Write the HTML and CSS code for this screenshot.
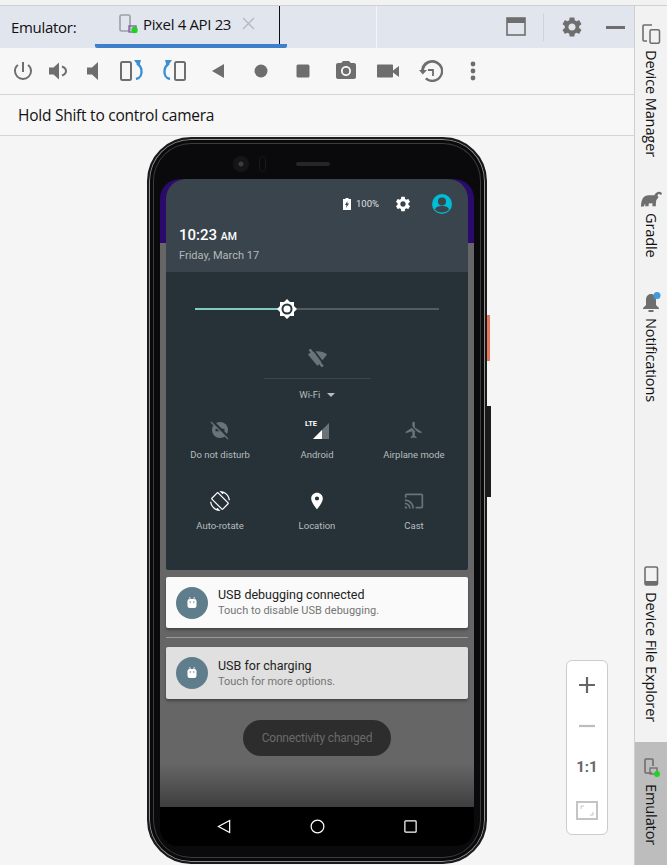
FILE: index.html
```html
<!DOCTYPE html>
<html lang="en">
<head>
    <meta charset="UTF-8">
    <meta name="viewport" content="width=device-width, initial-scale=1.0">
    <title>Emulator</title>
    <link rel="stylesheet" href="styles.css">
</head>
<body>
    <div class="app">
        <div class="main">
            <div class="tabbar">
                <span class="tabbar-label">Emulator:</span>
                <div class="tab">
                    <svg class="tab-icon" viewBox="0 0 20 20">
                        <rect x="1" y="1" width="10" height="16" rx="1.5" fill="none" stroke="#9aa0a6" stroke-width="1.6"/>
                        <rect x="10" y="12" width="7" height="6" fill="none" stroke="#8c5fa8" stroke-width="1.4"/>
                        <circle cx="15.5" cy="16" r="3.2" fill="#22d422"/>
                    </svg>
                    <span class="tab-title">Pixel 4 API 23</span>
                    <svg class="tab-close" viewBox="0 0 12 12"><path d="M1 1l10 10M11 1L1 11" stroke="#b4b8be" stroke-width="1.2"/></svg>
                </div>
                <div class="tabbar-rule"></div>
                <div class="tabbar-actions">
                    <svg class="act-window" viewBox="0 0 20 20"><rect x="1" y="1" width="18" height="17" fill="none" stroke="#6e6e6e" stroke-width="1.6"/><rect x="1" y="1" width="18" height="5" fill="#6e6e6e"/></svg>
                    <span class="act-sep"></span>
                    <svg class="act-gear" viewBox="0 0 24 24"><path fill="#6e6e6e" d="M19.14 12.94c.04-.3.06-.61.06-.94 0-.32-.02-.64-.07-.94l2.03-1.58c.18-.14.23-.41.12-.61l-1.92-3.32c-.12-.22-.37-.29-.59-.22l-2.39.96c-.5-.38-1.03-.7-1.62-.94l-.36-2.54c-.04-.24-.24-.41-.48-.41h-3.84c-.24 0-.43.17-.47.41l-.36 2.54c-.59.24-1.13.57-1.62.94l-2.39-.96c-.22-.08-.47 0-.59.22L2.74 8.87c-.12.21-.08.47.12.61l2.03 1.58c-.05.3-.09.63-.09.94s.02.64.07.94l-2.03 1.58c-.18.14-.23.41-.12.61l1.92 3.32c.12.22.37.29.59.22l2.39-.96c.5.38 1.03.7 1.62.94l.36 2.54c.05.24.24.41.48.41h3.84c.24 0 .44-.17.47-.41l.36-2.54c.59-.24 1.13-.56 1.62-.94l2.39.96c.22.08.47 0 .59-.22l1.92-3.32c.12-.22.07-.47-.12-.61l-2.01-1.58zM12 15.6c-1.98 0-3.6-1.62-3.6-3.6s1.62-3.6 3.6-3.6 3.6 1.62 3.6 3.6-1.62 3.6-3.6 3.6z"/></svg>
                    <span class="act-min"></span>
                </div>
            </div>

            <div class="toolbar">
                <div class="tool"><svg viewBox="0 0 24 24"><path fill="#6e6e6e" d="M13 3h-2v10h2V3zm4.83 2.17l-1.42 1.42A6.92 6.92 0 0 1 19 12c0 3.87-3.13 7-7 7A6.995 6.995 0 0 1 7.58 6.58L6.17 5.17A8.932 8.932 0 0 0 3 12a9 9 0 0 0 18 0c0-2.74-1.23-5.18-3.17-6.83z"/></svg></div>
                <div class="tool"><svg viewBox="0 0 24 24"><path fill="#6e6e6e" d="M2 8.5v7h4.5l5.5 5V3.500L6.500 8.500H2z"/><path fill="none" stroke="#6e6e6e" stroke-width="2" d="M15 7.500c3 1 4 3 4 4.500s-1 3.500-4 4.500"/></svg></div>
                <div class="tool"><svg viewBox="0 0 24 24"><path fill="#6e6e6e" d="M4 8.500v7h5l6 5.500V3L9 8.500H4z"/></svg></div>
                <div class="tool"><svg class="tool-rot" viewBox="0 0 26 24">
                    <rect x="2" y="3" width="10" height="18" rx="1.500" fill="none" stroke="#6e6e6e" stroke-width="2"/>
                    <path fill="none" stroke="#3d8fd1" stroke-width="2.400" d="M17 20c4.500-1 6-5 5.500-8.500-.3-2.500-2-5.500-4.500-7"/>
                    <path fill="#3d8fd1" d="M15 1h7l-2 7z"/>
                </svg></div>
                <div class="tool"><svg class="tool-rot" viewBox="0 0 26 24">
                    <rect x="14" y="3" width="10" height="18" rx="1.500" fill="none" stroke="#6e6e6e" stroke-width="2"/>
                    <path fill="none" stroke="#3d8fd1" stroke-width="2.400" d="M9 20c-4.500-1-6-5-5.500-8.500.3-2.500 2-5.500 4.500-7"/>
                    <path fill="#3d8fd1" d="M11 1H4l2 7z"/>
                </svg></div>
                <div class="tool"><svg viewBox="0 0 24 24"><path fill="#6e6e6e" d="M18 5v14L6 12z"/></svg></div>
                <div class="tool"><svg viewBox="0 0 24 24"><circle cx="12" cy="12" r="6.500" fill="#6e6e6e"/></svg></div>
                <div class="tool"><svg viewBox="0 0 24 24"><rect x="5.500" y="5.500" width="13" height="13" rx="1.500" fill="#6e6e6e"/></svg></div>
                <div class="tool"><svg viewBox="0 0 24 24"><path fill="#6e6e6e" d="M9 2L7.170 4H4c-1.100 0-2 .9-2 2v12c0 1.100.9 2 2 2h16c1.100 0 2-.9 2-2V6c0-1.100-.9-2-2-2h-3.170L15 2H9zm3 15c-2.760 0-5-2.240-5-5s2.240-5 5-5 5 2.240 5 5-2.240 5-5 5z"/><circle cx="12" cy="12" r="3.200" fill="#6e6e6e"/></svg></div>
                <div class="tool"><svg viewBox="0 0 24 24"><path fill="#6e6e6e" d="M17 10.500V6.500c0-.55-.45-1-1-1H2c-.55 0-1 .45-1 1v11c0 .55.45 1 1 1h14c.55 0 1-.45 1-1v-4l6 4.500v-11l-6 4.500z"/></svg></div>
                <div class="tool"><svg viewBox="0 0 24 24"><path fill="#6e6e6e" d="M13 1a11 11 0 0 0-11 10H0l3.800 4.500L8 11H5a8.500 8.500 0 1 1 2.700 7.500L6 20.300A11 11 0 1 0 13 1z"/><path fill="none" stroke="#6e6e6e" stroke-width="1.800" d="M9 11h5v6"/></svg></div>
                <div class="tool"><svg viewBox="0 0 24 24"><circle cx="12" cy="5" r="2.400" fill="#6e6e6e"/><circle cx="12" cy="12" r="2.400" fill="#6e6e6e"/><circle cx="12" cy="19" r="2.400" fill="#6e6e6e"/></svg></div>
            </div>

            <div class="hint">Hold Shift to control camera</div>

            <div class="workspace">
                <div class="phone">
                    <span class="btn-power"></span>
                    <span class="btn-volume"></span>
                    <div class="bezel-top">
                        <span class="camera"></span>
                        <span class="sensor"></span>
                        <span class="speaker"></span>
                    </div>
                    <div class="screen">
                        <div class="shade">
                            <div class="qs-header">
                                <div class="qs-status">
                                    <svg class="qs-battery" viewBox="0 0 8 12"><path fill="#fff" d="M2.500 0h3v1H8v11H0V1h2.500z"/><path fill="#3a444c" d="M4.500 3L2 7h1.500L3 10l3-4.500H4.300z"/></svg>
                                    <span class="qs-percent">100%</span>
                                    <svg class="qs-gear" viewBox="0 0 24 24"><path fill="#fff" d="M19.140 12.940c.04-.3.06-.61.06-.94 0-.32-.02-.64-.07-.94l2.030-1.580c.18-.14.23-.41.12-.61l-1.920-3.320c-.12-.22-.37-.29-.59-.22l-2.390.96c-.5-.38-1.030-.7-1.620-.94l-.36-2.540c-.04-.24-.24-.41-.48-.41h-3.840c-.24 0-.43.17-.47.41l-.36 2.540c-.59.24-1.130.57-1.620.94l-2.390-.96c-.22-.08-.47 0-.59.22L2.740 8.870c-.12.21-.08.47.12.61l2.030 1.580c-.05.3-.09.63-.09.94s.02.64.07.94l-2.030 1.580c-.18.14-.23.41-.12.61l1.920 3.320c.12.22.37.29.59.22l2.390-.96c.5.38 1.030.7 1.620.94l.36 2.540c.05.24.24.41.48.41h3.840c.24 0 .44-.17.47-.41l.36-2.540c.59-.24 1.130-.56 1.620-.94l2.390.96c.22.08.47 0 .59-.22l1.920-3.320c.12-.22.07-.47-.12-.61l-2.010-1.580zM12 15.600c-1.980 0-3.600-1.620-3.600-3.600s1.620-3.600 3.600-3.600 3.600 1.620 3.600 3.600-1.620 3.600-3.600 3.600z"/></svg>
                                    <svg class="qs-avatar" viewBox="0 0 20 20"><circle cx="10" cy="10" r="10" fill="#00bcd4"/><circle cx="10" cy="7.500" r="4" fill="#3a444c"/><path fill="#3a444c" d="M3 15.500c1-3 4-3.500 7-3.500s6 .5 7 3.500c-1.500 1.800-4 3-7 3s-5.500-1.200-7-3z"/></svg>
                                </div>
                                <div class="qs-time">10:23 <small>AM</small></div>
                                <div class="qs-date">Friday, March 17</div>
                            </div>
                            <div class="qs-body">
                                <div class="slider">
                                    <div class="slider-fill"></div>
                                    <svg class="slider-thumb" viewBox="0 0 20 20"><path fill="#fff" d="M10 0l3 3h4v4l3 3-3 3v4h-4l-3 3-3-3H3v-4l-3-3 3-3V3h4z"/><circle cx="10" cy="10" r="5.500" fill="#263238"/><circle cx="10" cy="10" r="3.500" fill="#fff"/></svg>
                                </div>
                                <div class="wifi">
                                    <svg class="wifi-icon" viewBox="0 0 24 20"><path fill="#6a7377" d="M12 19L1 6c6-5 16-5 22 0z"/><path stroke="#263238" stroke-width="2" d="M6 -1l15 20"/><path stroke="#6a7377" stroke-width="3" d="M3 0l15 20"/></svg>
                                    <div class="wifi-rule"></div>
                                    <div class="wifi-label">Wi-Fi <span class="caret"></span></div>
                                </div>
                                <div class="qs-grid">
                                    <div class="qs-tile">
                                        <svg viewBox="0 0 20 20"><circle cx="10" cy="10" r="8" fill="#6a7377"/><rect x="5.500" y="8.700" width="9" height="2.600" fill="#263238"/><path stroke="#263238" stroke-width="3" d="M2 1l17 17"/><path stroke="#6a7377" stroke-width="1.300" d="M1 2l17 17"/></svg>
                                        <span>Do not disturb</span>
                                    </div>
                                    <div class="qs-tile">
                                        <div class="signal">
                                            <span class="signal-lte">LTE</span>
                                            <svg viewBox="0 0 16 16"><path fill="#6a7377" d="M16 0v16H0z"/><path fill="#fff" d="M9 7v9H0z"/></svg>
                                        </div>
                                        <span>Android</span>
                                    </div>
                                    <div class="qs-tile">
                                        <svg viewBox="0 0 24 24"><path fill="#6a7377" d="M21 16v-2l-8-5V3.500c0-.83-.67-1.500-1.500-1.500S10 2.670 10 3.500V9l-8 5v2l8-2.500V19l-2 1.500V22l3.500-1 3.500 1v-1.500L13 19v-5.500l8 2.500z"/><path stroke="#263238" stroke-width="1.500" d="M4 3l17 17"/></svg>
                                        <span>Airplane mode</span>
                                    </div>
                                    <div class="qs-tile">
                                        <svg viewBox="0 0 24 24"><path fill="#fff" d="M16.480 2.520c3.270 1.550 5.610 4.720 5.970 8.480h1.500C23.440 4.840 18.290 0 12 0l-.66.03 3.810 3.810 1.330-1.320zm-6.250-.77c-.59-.59-1.540-.59-2.120 0L1.750 8.110c-.59.59-.59 1.540 0 2.120l12.020 12.020c.59.59 1.540.59 2.120 0l6.360-6.360c.59-.59.59-1.540 0-2.120L10.230 1.750zm4.600 19.440L2.810 9.170l6.360-6.360 12.020 12.020-6.360 6.360zm-7.310.29C4.250 19.940 1.910 16.760 1.550 13H.05C.56 19.160 5.710 24 12 24l.66-.03-3.810-3.810-1.330 1.320z"/></svg>
                                        <span>Auto-rotate</span>
                                    </div>
                                    <div class="qs-tile">
                                        <svg viewBox="0 0 24 24"><path fill="#fff" d="M12 2C8.130 2 5 5.130 5 9c0 5.250 7 13 7 13s7-7.750 7-13c0-3.870-3.130-7-7-7zm0 9.500a2.500 2.500 0 0 1 0-5 2.500 2.500 0 0 1 0 5z"/></svg>
                                        <span>Location</span>
                                    </div>
                                    <div class="qs-tile">
                                        <svg viewBox="0 0 24 24"><path fill="#6a7377" d="M21 3H3c-1.100 0-2 .9-2 2v3h2V5h18v14h-7v2h7c1.100 0 2-.9 2-2V5c0-1.100-.9-2-2-2zM1 18v3h3c0-1.660-1.340-3-3-3zm0-4v2c2.760 0 5 2.240 5 5h2c0-3.870-3.130-7-7-7zm0-4v2c4.970 0 9 4.030 9 9h2c0-6.080-4.930-11-11-11z"/></svg>
                                        <span>Cast</span>
                                    </div>
                                </div>
                            </div>
                            <div class="note note-first">
                                <div class="note-badge">
                                    <svg viewBox="0 0 12 12"><path stroke="#fff" stroke-width=".8" d="M3.500 0l1 2.500M8.500 0l-1 2.500"/><rect x="1.500" y="2" width="9" height="9" rx="2.200" fill="#fff"/><circle cx="4.200" cy="5" r=".7" fill="#607d8b"/><circle cx="7.800" cy="5" r=".7" fill="#607d8b"/></svg>
                                </div>
                                <div>
                                    <div class="note-title">USB debugging connected</div>
                                    <div class="note-sub">Touch to disable USB debugging.</div>
                                </div>
                            </div>
                            <div class="note-rule"></div>
                            <div class="note note-dim">
                                <div class="note-badge">
                                    <svg viewBox="0 0 12 12"><path stroke="#fff" stroke-width=".8" d="M3.500 0l1 2.500M8.500 0l-1 2.500"/><rect x="1.500" y="2" width="9" height="9" rx="2.200" fill="#fff"/><circle cx="4.200" cy="5" r=".7" fill="#607d8b"/><circle cx="7.800" cy="5" r=".7" fill="#607d8b"/></svg>
                                </div>
                                <div>
                                    <div class="note-title">USB for charging</div>
                                    <div class="note-sub">Touch for more options.</div>
                                </div>
                            </div>
                            <div class="toast">Connectivity changed</div>
                        </div>
                    </div>
                    <div class="navbar">
                        <svg viewBox="0 0 16 16"><path fill="none" stroke="#fff" stroke-width="1.300" d="M13.500 1.500v13L1.500 8z"/></svg>
                        <svg viewBox="0 0 16 16"><circle cx="8" cy="8" r="6.800" fill="none" stroke="#fff" stroke-width="1.300"/></svg>
                        <svg viewBox="0 0 16 16"><rect x="2" y="2" width="12" height="12" rx=".8" fill="none" stroke="#fff" stroke-width="1.300"/></svg>
                    </div>
                </div>

                <div class="zoom-box">
                    <svg viewBox="0 0 16 16"><path stroke="#666" stroke-width="2.200" d="M8 0v16M0 8h16"/></svg>
                    <svg viewBox="0 0 16 16"><path stroke="#bdbdbd" stroke-width="2.200" d="M0 8h16"/></svg>
                    <span class="zoom-ratio">1:1</span>
                    <svg viewBox="0 0 22 19"><rect x="1" y="1" width="20" height="17" fill="none" stroke="#c4c4c4" stroke-width="2"/><path fill="none" stroke="#c4c4c4" d="M5 8V5h3M17 11v3h-3"/></svg>
                </div>
            </div>
        </div>

        <div class="sidebar">
            <div class="side-item side-device">
                <svg viewBox="0 0 20 20"><path fill="none" stroke="#6e6e6e" stroke-width="1.600" d="M11 1H3a1 1 0 0 0-1 1v14a1 1 0 0 0 1 1h3"/><rect x="9" y="5.800" width="9.500" height="13.500" rx="1.500" fill="none" stroke="#6e6e6e" stroke-width="1.500"/></svg>
                <span>Device Manager</span>
            </div>
            <div class="side-item side-gradle">
                <svg viewBox="0 0 22 16"><path fill="#6e6e6e" d="M0 16C0 8 3 4 8 4h6c1-2 3-3.500 5-3.500 2 0 3 1 3 2.500l-2 .5c-.5-1-1.500-1-2.200-.3-.6.7-.3 1.800.5 3l-2.300 3c-.4 2-.5 4-.5 6.300h-3.500v-3l-4 .3v2.700H4.500v-2.500c-1 .6-1 1.400-1 2.500z"/></svg>
                <span>Gradle</span>
            </div>
            <div class="side-item side-bell">
                <svg viewBox="0 0 20 20"><path fill="#6e6e6e" d="M10 2c-3 0-5 2.500-5 6v5l-3 3v1h16v-1l-3-3V8c0-3.500-2-6-5-6z"/><rect x="7.500" y="18" width="5" height="2" fill="#6e6e6e"/><circle cx="16" cy="3.500" r="3.500" fill="#3d9be0"/></svg>
                <span>Notifications</span>
            </div>
            <div class="side-spacer"></div>
            <div class="side-item side-files">
                <svg viewBox="0 0 20 20"><rect x="4" y="1" width="12.500" height="18" rx="1.500" fill="none" stroke="#6e6e6e" stroke-width="1.600"/><rect x="4" y="15" width="12.500" height="4" fill="#6e6e6e"/></svg>
                <span>Device File Explorer</span>
            </div>
            <div class="side-item side-emulator">
                <svg viewBox="0 0 20 20"><path fill="none" stroke="#6e6e6e" stroke-width="1.600" d="M11 15H5a1 1 0 0 1-1-1V2a1 1 0 0 1 1-1h6a1 1 0 0 1 1 1v6"/><rect x="9" y="10" width="7" height="6" fill="none" stroke="#6e6e6e" stroke-width="1.300"/><circle cx="16" cy="16" r="3" fill="#22d422"/></svg>
                <span>Emulator</span>
            </div>
        </div>
    </div>
</body>
</html>
```

FILE: styles.css
```css
* {
    box-sizing: border-box;
}
body {
    margin: 0;
    height: 865px;
    overflow: hidden;
    background-color: #f2f2f2;
    font-family: "Open Sans", Arial, sans-serif;
    color: #111;
}
svg {
    display: block;
}
.app {
    display: flex;
    height: 865px;
    padding-top: 5px;
}
.main {
    width: 634px;
    display: flex;
    flex-direction: column;
    border-top: 1px solid #d0d0d0;
}

/* tab strip */
.tabbar {
    height: 42px;
    background-color: #e1e5ee;
    display: flex;
    padding-left: 11px;
    font-size: 15px;
}
.tabbar-label {
    width: 84px;
    line-height: 42px;
    letter-spacing: -0.3px;
}
.tab {
    width: 192px;
    display: flex;
    align-items: center;
    padding: 0 24px 3px;
    border-bottom: 4px solid #3d7fc9;
    border-radius: 0 0 2px 2px;
    position: relative;
}
.tab::after {
    content: "";
    position: absolute;
    top: 0;
    bottom: 0;
    right: 7px;
    width: 1px;
    background-color: #111;
}
.tab-icon {
    width: 20px;
    height: 20px;
    flex: none;
}
.tab-title {
    margin-left: 4px;
    white-space: nowrap;
    letter-spacing: -0.35px;
}
.tab-close {
    width: 13px;
    height: 13px;
    flex: none;
    margin-left: 11px;
}
.tabbar-rule {
    width: 1px;
    margin-left: 89px;
    background-color: #f4f5f8;
}
.tabbar-actions {
    display: flex;
    align-items: center;
    margin-left: 129px;
}
.act-window {
    width: 20px;
    height: 20px;
}
.act-sep {
    width: 1px;
    height: 28px;
    margin-left: 17px;
    background-color: #cfd3db;
}
.act-gear {
    width: 24px;
    height: 24px;
    margin-left: 16px;
}
.act-min {
    width: 19px;
    height: 3px;
    margin-left: 22px;
    background-color: #6e6e6e;
}

/* toolbar */
.toolbar {
    height: 47px;
    padding-left: 5px;
    display: grid;
    grid-template-columns: 36px 36px 35px 39px 46px repeat(7, 42.500px);
    align-items: center;
    background-color: #f7f7f7;
    border-bottom: 1px solid #d4d4d4;
}
.tool {
    display: flex;
    justify-content: center;
}
.tool svg {
    width: 24px;
    height: 24px;
}
.tool .tool-rot {
    width: 26px;
}
.hint {
    height: 41px;
    padding-left: 18px;
    line-height: 40px;
    font-size: 15.500px;
    letter-spacing: -0.25px;
    background-color: #f7f7f7;
    border-bottom: 1px solid #d4d4d4;
}

/* device */
.workspace {
    flex: 1;
    position: relative;
    background-color: #f5f5f5;
    padding-top: 1px;
}
.phone {
    width: 340px;
    height: 727px;
    margin: 0 auto;
    padding: 0 11px;
    position: relative;
    background-color: #0a0a0c;
    border: 2px solid #1a1a1a;
    border-radius: 44px;
    box-shadow: inset 0 0 0 1px #8f8f8f, inset 0 0 0 4px #0a0a0c, inset 0 0 0 5px #3c3c3c;
    font-family: Roboto, Arial, sans-serif;
}
.btn-power {
    position: absolute;
    left: 338px;
    top: 176px;
    width: 3px;
    height: 46px;
    background-color: #e8775a;
}
.btn-volume {
    position: absolute;
    left: 338px;
    top: 267px;
    width: 4px;
    height: 91px;
    background-color: #1a1a1a;
}
.bezel-top {
    height: 40px;
    display: flex;
    align-items: center;
    padding: 10px 0 0 73px;
}
.camera {
    width: 16px;
    height: 16px;
    border-radius: 50%;
    background: radial-gradient(circle, #3a3a4a 0 2px, #151515 3px 100%);
}
.sensor {
    width: 7px;
    height: 16px;
    margin-left: 10px;
    border-radius: 4px;
    border: 1px solid #1a1a1a;
}
.speaker {
    width: 34px;
    height: 4px;
    margin-left: 30px;
    border-radius: 2px;
    background-color: #262626;
}
.screen {
    height: 628px;
    border-radius: 20px 20px 0 0;
    padding: 0 6px;
    background: linear-gradient(#2b0a6e 64px, #666 64px, #666 585px, #3e3e3e 628px);
}
.shade {
    display: flex;
    flex-direction: column;
}

/* quick settings */
.qs-header {
    height: 93px;
    padding: 0 13px;
    background-color: #3a444c;
    border-radius: 20px 20px 0 0;
    color: #fff;
}
.qs-status {
    height: 47px;
    display: flex;
    align-items: center;
    justify-content: flex-end;
    padding-top: 2px;
    margin-right: 3px;
}
.qs-battery {
    width: 8px;
    height: 12px;
}
.qs-percent {
    margin-left: 5px;
    font-size: 9.500px;
    color: #dfe1e2;
}
.qs-gear {
    width: 18px;
    height: 18px;
    margin-left: 15px;
}
.qs-avatar {
    width: 20px;
    height: 20px;
    margin-left: 20px;
}
.qs-time {
    font-size: 15px;
    font-weight: 500;
    line-height: 18px;
}
.qs-time small {
    font-size: 10.500px;
}
.qs-date {
    margin-top: 3px;
    font-size: 11px;
    line-height: 14px;
    color: #b4b8ba;
}
.qs-body {
    height: 298px;
    background-color: #263238;
    border-radius: 0 0 2px 2px;
    padding: 36px 6px 0;
    color: #b8bcbe;
}
.slider {
    height: 2px;
    margin: 0 23px;
    position: relative;
    background-color: #535c61;
}
.slider-fill {
    width: 92px;
    height: 2px;
    background-color: #80cbc4;
}
.slider-thumb {
    position: absolute;
    left: 82px;
    top: -9px;
    width: 20px;
    height: 20px;
}
.wifi {
    margin-top: 39px;
    display: flex;
    flex-direction: column;
    align-items: center;
}
.wifi-icon {
    width: 21px;
    height: 18px;
    overflow: hidden;
}
.wifi-rule {
    width: 107px;
    height: 1px;
    margin-top: 11px;
    background-color: #3b464c;
}
.wifi-label {
    margin-top: 10px;
    font-size: 9.500px;
    line-height: 12px;
}
.caret {
    display: inline-block;
    margin-left: 4px;
    vertical-align: 1px;
    border: 4px solid transparent;
    border-top-color: #b8bcbe;
    border-bottom: 0;
}
.qs-grid {
    margin-top: 19px;
    display: grid;
    grid-template-columns: repeat(3, 97px);
    grid-auto-rows: 71px;
    margin-left: -0.500px;
}
.qs-tile {
    display: flex;
    flex-direction: column;
    align-items: center;
    font-size: 9.500px;
    white-space: nowrap;
}
.qs-tile svg {
    width: 20px;
    height: 20px;
    margin-bottom: 9px;
}
.signal {
    position: relative;
    width: 24px;
    height: 20px;
    margin-bottom: 9px;
    padding: 3px 0 0 8px;
}
.signal svg {
    width: 16px;
    height: 16px;
    margin: 0;
}
.signal-lte {
    position: absolute;
    left: 0;
    top: -1px;
    font-size: 7.500px;
    font-weight: 700;
    color: #fff;
}

/* notifications */
.note {
    display: flex;
    align-items: center;
    height: 51px;
    margin-top: 7px;
    padding-left: 10px;
    background-color: #fafafa;
    border-radius: 2px;
    box-shadow: 0 2px 3px rgba(0, 0, 0, 0.35);
}
.note-dim {
    height: 52px;
    margin-top: 9px;
    background-color: #e0e0e0;
}
.note-rule {
    height: 1px;
    margin-top: 9px;
    background-color: #999;
}
.note-badge {
    width: 32px;
    height: 32px;
    flex: none;
    margin-right: 10px;
    display: flex;
    align-items: center;
    justify-content: center;
    border-radius: 50%;
    background-color: #607d8b;
}
.note-badge svg {
    width: 12px;
    height: 12px;
}
.note-title {
    font-size: 12.500px;
    line-height: 16px;
    color: #222;
}
.note-sub {
    font-size: 11px;
    line-height: 15px;
    color: #757575;
}
.toast {
    align-self: center;
    width: 148px;
    height: 36px;
    margin-top: 21px;
    border-radius: 18px;
    line-height: 36px;
    text-align: center;
    font-size: 12px;
    letter-spacing: -0.2px;
    color: #6a6a6a;
    background-color: #2d2d2d;
}
.navbar {
    height: 39px;
    display: grid;
    grid-template-columns: repeat(3, 93px);
    justify-content: center;
    align-items: center;
    justify-items: center;
    background-color: #000;
    border-radius: 0 0 18px 18px;
}
.navbar svg {
    width: 15px;
    height: 15px;
}

/* zoom controls */
.zoom-box {
    position: absolute;
    left: 566px;
    top: 524px;
    width: 42px;
    height: 175px;
    display: flex;
    flex-direction: column;
    align-items: center;
    justify-content: space-between;
    padding: 16px 0 14px;
    background-color: #fff;
    border: 1px solid #ccc;
    border-radius: 6px;
}
.zoom-box svg {
    width: 16px;
    height: 16px;
}
.zoom-box svg:last-child {
    width: 22px;
    height: 19px;
}
.zoom-ratio {
    font-family: Roboto, Arial, sans-serif;
    font-weight: 700;
    font-size: 15px;
    line-height: 18px;
    color: #666;
}

/* right tool windows */
.sidebar {
    width: 33px;
    display: flex;
    flex-direction: column;
    align-items: center;
    border-top: 1px solid #d0d0d0;
    border-left: 1px solid #cfcfcf;
    background-color: #f2f2f2;
}
.side-item {
    width: 100%;
    display: flex;
    flex-direction: column;
    align-items: center;
    font-size: 14.500px;
    letter-spacing: -0.1px;
}
.side-item span {
    writing-mode: vertical-rl;
    line-height: 20px;
    margin-top: 6px;
}
.side-item svg {
    width: 20px;
    height: 20px;
}
.side-device {
    margin-top: 18px;
}
.side-gradle {
    margin-top: 34px;
}
.side-gradle svg {
    width: 21px;
    height: 16px;
}
.side-bell {
    margin-top: 34px;
}
.side-spacer {
    flex: 1;
}
.side-emulator {
    height: 123px;
    margin-top: 20px;
    padding-top: 16px;
    background-color: #bdbdbd;
}
```
